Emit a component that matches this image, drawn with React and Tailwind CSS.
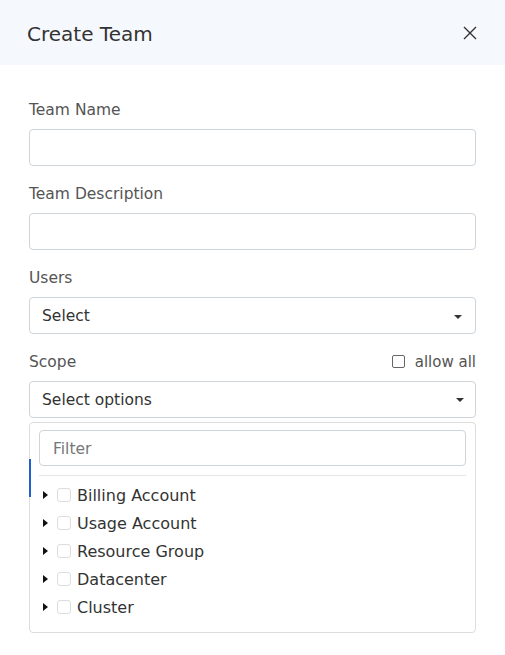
import React from "react";

const items = ["Billing Account", "Usage Account", "Resource Group", "Datacenter", "Cluster"];

function Caret() {
  return (
    <svg width="8" height="4" viewBox="0 0 8 4" className="fill-[#333]">
      <path d="M0 0h8L4 4z" />
    </svg>
  );
}

function Field({ label, children }) {
  return (
    <div className="mb-[16px]">
      <div className="mb-[9px] h-[22px] text-[15.5px] leading-[24px] text-[#555]">{label}</div>
      {children}
    </div>
  );
}

export default function App() {
  return (
    <div className="min-h-[655px] w-[505px] bg-white font-['DejaVu_Sans',sans-serif]">
      <div className="flex h-[65px] items-center justify-between bg-[#f5f9fe] pl-[27px] pr-[28px]">
        <h1 className="pt-[2px] text-[20px] text-[#333]">Create Team</h1>
        <svg width="14" height="14" viewBox="0 0 14 14" className="stroke-[#333]" strokeWidth="1.4">
          <path d="M1 1l12 12M13 1L1 13" />
        </svg>
      </div>

      <div className="px-[29px] pt-[33px]">
        <Field label="Team Name">
          <input className="block h-[37px] w-full rounded-[4px] border border-[#ced4da] px-3 outline-none" />
        </Field>
        <Field label="Team Description">
          <input className="block h-[37px] w-full rounded-[4px] border border-[#ced4da] px-3 outline-none" />
        </Field>
        <Field label="Users">
          <div className="flex h-[37px] items-center justify-between rounded-[4px] border border-[#ced4da] pl-[12px] pr-[13px] text-[15.5px] text-[#333]">
            <span className="pt-[3px]">Select</span>
            <span className="mt-[2px]"><Caret /></span>
          </div>
        </Field>

        <div className="mb-[9px] flex h-[22px] items-center justify-between text-[15.5px] leading-[24px] text-[#555]">
          <span className="pt-[2px]">Scope</span>
          <label className="flex items-center gap-[10px]">
            <span className="h-[13px] w-[13px] rounded-[2px] border border-[#666]" />
            <span className="pt-[2px] text-[15px]">allow all</span>
          </label>
        </div>

        <div className="relative">
          <div className="flex h-[37px] items-center justify-between rounded-[4px] border border-[#ced4da] pl-[12px] pr-[11px] text-[15.5px] text-[#333]">
            <span className="pt-[3px]">Select options</span>
            <Caret />
          </div>

          <div className="absolute left-0 right-0 top-[41px] rounded-[4px] border border-[#ddd] bg-white px-[9px] pb-[11px] pt-[7px]">
            <div className="absolute -left-px top-[36px] h-[38px] w-[2px] bg-[#1f5fd0]" />
            <input
              placeholder="Filter"
              className="block h-[36px] w-full rounded-[4px] border border-[#ced4da] px-[13px] pt-[2px] text-[15.5px] text-[#333] outline-none placeholder:text-[#777]"
            />
            <div className="mt-[9px] border-t border-[#e5e5e5]" />
            <ul className="mt-[5px]">
              {items.map((name) => (
                <li key={name} className="flex h-[28px] items-center text-[16px] text-[#333]">
                  <svg width="5" height="8" viewBox="0 0 5 8" className="ml-[4px] fill-[#111]">
                    <path d="M0 0l5 4-5 4z" />
                  </svg>
                  <span className="ml-[9px] h-[14px] w-[14px] rounded-[3px] border border-[#ddd]" />
                  <span className="ml-[6px] pt-[2px]">{name}</span>
                </li>
              ))}
            </ul>
          </div>
        </div>
      </div>
    </div>
  );
}
